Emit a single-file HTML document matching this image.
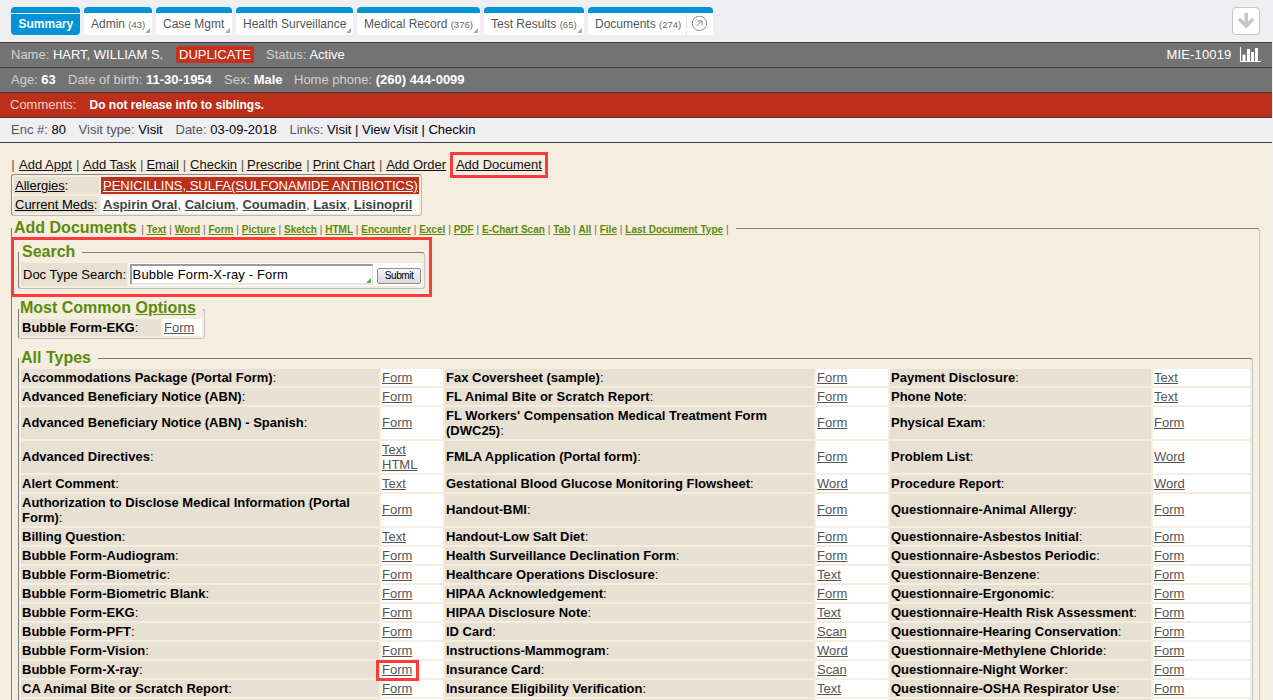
<!DOCTYPE html>
<html><head><meta charset="utf-8">
<style>
*{box-sizing:border-box;margin:0;padding:0}
html,body{width:1273px;height:700px;overflow:hidden}
body{font-family:"Liberation Sans",sans-serif;font-size:13px;background:#efefef;position:relative;color:#000}
#bg{position:absolute;left:0;top:143px;width:1272px;height:600px;background:#f5eddf}
#top{position:absolute;left:0;top:0;width:1273px;height:42px;background:#efeef3}
.tab{position:absolute;top:7px;height:28px;background:#fff;border-radius:4px 4px 2px 2px;border-top:6px solid #0093d6;color:#555;font-size:12px;line-height:16px;padding:3px 0 0 7px;white-space:nowrap}
.tab small{font-size:9.5px;color:#666}
.tab .tri{position:absolute;right:2px;bottom:2px;width:0;height:0;border-left:5px solid transparent;border-bottom:5px solid #aaa}
.row{position:absolute;left:0;width:1272px;height:25px;border-top:1px solid #3e3e3e}
.g{background:#737373;color:#d2d2d2}
.g b{font-weight:normal;color:#fff}
.t{position:absolute;top:4px;white-space:nowrap;line-height:16px}
.lt b{font-weight:normal;color:#000}
.act{position:absolute;left:12px;top:157px;white-space:nowrap;line-height:16px;color:#555}
.act u{color:#111}
.redbox{position:absolute;border:3px solid #fd3b3b}
.fs{position:absolute;border:1px solid;border-color:#7d7d7d #c6c6c6 #bdbdbd #7d7d7d;border-radius:3px}
.fl{border-top-left-radius:0}
.leg{position:absolute;font-size:16px;font-weight:bold;color:#5c8b0a;white-space:nowrap;line-height:19px;background:#f5eddf;padding-right:7px}
.legl{font-size:10px;color:#666;font-weight:normal;word-spacing:.09px}
.legl u{font-weight:bold;color:#5c8b0a}
table{border-collapse:separate;border-spacing:2px;table-layout:fixed}
td{padding:1px;line-height:15px;vertical-align:middle;overflow:hidden}
td.l{background:#e8e1d3;color:#000}
.nw td{white-space:nowrap}
td.l b{font-weight:bold}
td.k{background:#fff;color:#555}
td.k u{color:#555}
td.up{padding-top:0;padding-bottom:2px}
</style></head><body>
<div id="bg"></div>
<div id="top">
  <div class="tab" style="left:11px;width:69px;background:#0093d6;color:#fff;font-weight:bold;padding-left:7.5px;border-radius:4px;box-shadow:inset 0 1px 0 #e6f4fb">Summary</div>
  <div class="tab" style="left:84px;width:68px">Admin <small>(43)</small><span class="tri"></span></div>
  <div class="tab" style="left:156px;width:76px">Case Mgmt<span class="tri"></span></div>
  <div class="tab" style="left:236px;width:117px">Health Surveillance<span class="tri"></span></div>
  <div class="tab" style="left:357px;width:123px">Medical Record <small>(376)</small><span class="tri"></span></div>
  <div class="tab" style="left:484px;width:100px">Test Results <small>(65)</small><span class="tri"></span></div>
  <div class="tab" style="left:588px;width:125px">Documents <small>(274)</small>
    <span style="position:absolute;left:98px;top:0;width:1px;height:22px;background:#e4e4e4"></span>
    <svg style="position:absolute;left:103px;top:3px" width="17" height="16" viewBox="0 0 17 16"><circle cx="8.5" cy="7.3" r="7.2" fill="none" stroke="#8a8a8a" stroke-width="1"/><path d="M5.6 10.2L11 4.8M6.6 4.9h4.5v4.5" fill="none" stroke="#8a8a8a" stroke-width="1"/></svg>
  </div>
  <div style="position:absolute;left:1232px;top:7px;width:28px;height:28px;border:1px solid #c8c8c8;border-radius:4px;background:#fff">
    <svg style="position:absolute;left:4px;top:4px" width="18" height="18" viewBox="0 0 18 18"><path d="M9.2 1v12" fill="none" stroke="#c6c6ca" stroke-width="3.6"/><path d="M3.2 8l6 6 6-6" fill="none" stroke="#c6c6ca" stroke-width="3.6" stroke-linecap="round" stroke-linejoin="miter"/></svg>
  </div>
</div>
<div class="row g" style="top:42px">
  <span class="t" style="left:11px">Name: <b>HART, WILLIAM S.</b></span>
  <span class="t" style="left:176px;top:3px;height:17px;line-height:17px;background:#c4311c;color:#fff;border-radius:3px;padding:0 3px">DUPLICATE</span>
  <span class="t" style="left:266px">Status: <b>Active</b></span>
  <span class="t" style="left:1166.5px;color:#fff;letter-spacing:.15px">MIE-10019</span>
  <svg style="position:absolute;left:1239px;top:4px" width="23" height="17" viewBox="0 0 23 17"><path d="M1.5 0v14.5h20.5" fill="none" stroke="#fff" stroke-width="1.1"/><rect x="3.5" y="7.6" width="3" height="6.4" fill="#fff"/><rect x="8" y="2" width="3" height="12" fill="#fff"/><rect x="12" y="5" width="3" height="9" fill="#fff"/><rect x="16" y="1" width="3" height="13" fill="#fff"/></svg>
</div>
<div class="row g" style="top:67px">
  <span class="t" style="left:11px">Age: <b style="font-weight:bold">63</b></span>
  <span class="t" style="left:68px">Date of birth: <b style="font-weight:bold">11-30-1954</b></span>
  <span class="t" style="left:224px">Sex: <b style="font-weight:bold">Male</b></span>
  <span class="t" style="left:294px">Home phone: <b style="font-weight:bold">(260) 444-0099</b></span>
</div>
<div class="row" style="top:92px;background:#bd2f1b;color:#f3cfc4">
  <span class="t" style="left:10px">Comments:</span>
  <span class="t" style="left:89.5px;color:#fff;font-weight:bold;font-size:12px">Do not release info to siblings.</span>
</div>
<div class="row lt" style="top:117px;background:#efeef3;color:#555;border-bottom:1px solid #3e3e3e;height:26px">
  <span class="t" style="left:11px">Enc #: <b>80</b></span>
  <span class="t" style="left:78.6px">Visit type: <b>Visit</b></span>
  <span class="t" style="left:175.5px">Date: <b>03-09-2018</b></span>
  <span class="t" style="left:289.5px">Links: <b>Visit | View Visit | Checkin</b></span>
</div>

<div class="act" style="left:11.3px">|</div>
<div class="act" style="left:19.0px"><u>Add Appt</u></div>
<div class="act" style="left:75.9px">|</div>
<div class="act" style="left:83.1px"><u>Add Task</u></div>
<div class="act" style="left:140.0px">|</div>
<div class="act" style="left:146.4px"><u>Email</u></div>
<div class="act" style="left:182.8px">|</div>
<div class="act" style="left:190.1px"><u>Checkin</u></div>
<div class="act" style="left:240.7px">|</div>
<div class="act" style="left:247.0px"><u>Prescribe</u></div>
<div class="act" style="left:306.3px">|</div>
<div class="act" style="left:312.7px"><u>Print Chart</u></div>
<div class="act" style="left:378.9px">|</div>
<div class="act" style="left:386.2px"><u>Add Order</u></div>
<div class="act" style="left:455.9px"><u>Add Document</u></div>
<div class="redbox" style="left:450px;top:152px;width:98px;height:26px"></div>

<div class="fs" style="left:11px;top:174px;width:411px;height:42px;border-color:#8a8a8a #c0c0c0 #b8b8b8 #8a8a8a">
  <table class="nw" style="position:absolute;left:0;top:0">
    <tr style="height:17px"><td class="l" style="width:85px;color:#000"><u>Allergies</u>:</td><td style="width:317px;background:#bd2f1b;color:#fff;padding-left:2px"><u>PENICILLINS, SULFA(SULFONAMIDE ANTIBIOTICS)</u></td></tr>
    <tr style="height:17px"><td class="l"><u>Current Meds</u>:</td><td style="background:#fff;color:#444;padding-left:2px"><u><b>Aspirin Oral</b></u>, <u><b>Calcium</b></u>, <u><b>Coumadin</b></u>, <u><b>Lasix</b></u>, <u><b>Lisinopril</b></u></td></tr>
  </table>
</div>

<!-- Add Documents outer fieldset -->
<div class="fs fl" style="left:11px;top:228px;width:1249px;height:500px"></div>
<div class="leg" style="left:12px;top:218px;padding-left:2px">Add Documents <span class="legl">| <u>Text</u> | <u>Word</u> | <u>Form</u> | <u>Picture</u> | <u>Sketch</u> | <u>HTML</u> | <u>Encounter</u> | <u>Excel</u> | <u>PDF</u> | <u>E-Chart Scan</u> | <u>Tab</u> | <u>All</u> | <u>File</u> | <u>Last Document Type</u> |</span></div>

<!-- Search fieldset -->
<div class="fs fl" style="left:18px;top:252px;width:407px;height:37px"></div>
<div class="leg" style="left:19px;top:242px;padding-left:3px">Search</div>
<table class="nw" style="position:absolute;left:19px;top:261px">
  <tr style="height:23px"><td class="l" style="width:106px;padding-left:2px">Doc Type Search:</td><td style="width:293px;background:#fff;padding:0">
    <div style="position:relative;height:23px">
      <div style="position:absolute;left:1px;top:1px;width:243px;height:21px;border:2px solid #9a9a9a;border-right:1px solid #e2e2e2;border-bottom:2px solid #e6e6e6;background:#fff;padding:0 0 0 0.5px;line-height:17px;font-size:13px;letter-spacing:.15px">Bubble Form-X-ray - Form<span style="position:absolute;right:1px;bottom:0px;width:0;height:0;border-left:5px solid transparent;border-bottom:5px solid #5fb040"></span></div>
      <div style="position:absolute;left:248px;top:5px;width:44px;height:16px;border:1px solid #8e8f8f;border-radius:2px;background:linear-gradient(#f6f6f6,#dcdcdc);font-size:10px;line-height:14px;text-align:center;color:#000;letter-spacing:-0.4px">Submit</div>
    </div>
  </td></tr>
</table>
<div class="redbox" style="left:11px;top:237px;width:421px;height:60px"></div>

<!-- Most common fieldset -->
<div class="fs fl" style="left:18px;top:309px;width:187px;height:30px"></div>
<div class="leg" style="left:19px;top:298px;padding-left:1px">Most Common <u>Options</u></div>
<table class="nw" style="position:absolute;left:19px;top:317px">
  <tr style="height:17px"><td class="l" style="width:140px"><b>Bubble Form-EKG</b>:</td><td class="k" style="width:39px"><u>Form</u></td></tr>
</table>

<!-- All types fieldset -->
<div class="fs fl" style="left:18px;top:358px;width:1235px;height:400px"></div>
<div class="leg" style="left:19px;top:348px;padding-left:2px">All Types</div>
<table style="position:absolute;left:19px;top:367px;width:1233px">
<colgroup><col style="width:358px"><col style="width:62px"><col style="width:369px"><col style="width:72px"><col style="width:261px"><col style="width:97px"></colgroup>
<tr style="height:17px"><td class="l"><b>Accommodations Package (Portal Form)</b>:</td><td class="k"><u>Form</u></td><td class="l"><b>Fax Coversheet (sample)</b>:</td><td class="k"><u>Form</u></td><td class="l"><b>Payment Disclosure</b>:</td><td class="k"><u>Text</u></td></tr>
<tr style="height:17px"><td class="l"><b>Advanced Beneficiary Notice (ABN)</b>:</td><td class="k"><u>Form</u></td><td class="l"><b>FL Animal Bite or Scratch Report</b>:</td><td class="k"><u>Form</u></td><td class="l"><b>Phone Note</b>:</td><td class="k"><u>Text</u></td></tr>
<tr style="height:32px"><td class="l up"><b>Advanced Beneficiary Notice (ABN) - Spanish</b>:</td><td class="k up"><u>Form</u></td><td class="l"><b>FL Workers&#39; Compensation Medical Treatment Form (DWC25)</b>:</td><td class="k up"><u>Form</u></td><td class="l up"><b>Physical Exam</b>:</td><td class="k up"><u>Form</u></td></tr>
<tr style="height:32px"><td class="l up"><b>Advanced Directives</b>:</td><td class="k"><u>Text</u><br><u>HTML</u></td><td class="l up"><b>FMLA Application (Portal form)</b>:</td><td class="k up"><u>Form</u></td><td class="l up"><b>Problem List</b>:</td><td class="k up"><u>Word</u></td></tr>
<tr style="height:17px"><td class="l"><b>Alert Comment</b>:</td><td class="k"><u>Text</u></td><td class="l"><b>Gestational Blood Glucose Monitoring Flowsheet</b>:</td><td class="k"><u>Word</u></td><td class="l"><b>Procedure Report</b>:</td><td class="k"><u>Word</u></td></tr>
<tr style="height:32px"><td class="l"><b>Authorization to Disclose Medical Information (Portal Form)</b>:</td><td class="k up"><u>Form</u></td><td class="l up"><b>Handout-BMI</b>:</td><td class="k up"><u>Form</u></td><td class="l up"><b>Questionnaire-Animal Allergy</b>:</td><td class="k up"><u>Form</u></td></tr>
<tr style="height:17px"><td class="l"><b>Billing Question</b>:</td><td class="k"><u>Text</u></td><td class="l"><b>Handout-Low Salt Diet</b>:</td><td class="k"><u>Form</u></td><td class="l"><b>Questionnaire-Asbestos Initial</b>:</td><td class="k"><u>Form</u></td></tr>
<tr style="height:17px"><td class="l"><b>Bubble Form-Audiogram</b>:</td><td class="k"><u>Form</u></td><td class="l"><b>Health Surveillance Declination Form</b>:</td><td class="k"><u>Form</u></td><td class="l"><b>Questionnaire-Asbestos Periodic</b>:</td><td class="k"><u>Form</u></td></tr>
<tr style="height:17px"><td class="l"><b>Bubble Form-Biometric</b>:</td><td class="k"><u>Form</u></td><td class="l"><b>Healthcare Operations Disclosure</b>:</td><td class="k"><u>Text</u></td><td class="l"><b>Questionnaire-Benzene</b>:</td><td class="k"><u>Form</u></td></tr>
<tr style="height:17px"><td class="l"><b>Bubble Form-Biometric Blank</b>:</td><td class="k"><u>Form</u></td><td class="l"><b>HIPAA Acknowledgement</b>:</td><td class="k"><u>Form</u></td><td class="l"><b>Questionnaire-Ergonomic</b>:</td><td class="k"><u>Form</u></td></tr>
<tr style="height:17px"><td class="l"><b>Bubble Form-EKG</b>:</td><td class="k"><u>Form</u></td><td class="l"><b>HIPAA Disclosure Note</b>:</td><td class="k"><u>Text</u></td><td class="l"><b>Questionnaire-Health Risk Assessment</b>:</td><td class="k"><u>Form</u></td></tr>
<tr style="height:17px"><td class="l"><b>Bubble Form-PFT</b>:</td><td class="k"><u>Form</u></td><td class="l"><b>ID Card</b>:</td><td class="k"><u>Scan</u></td><td class="l"><b>Questionnaire-Hearing Conservation</b>:</td><td class="k"><u>Form</u></td></tr>
<tr style="height:17px"><td class="l"><b>Bubble Form-Vision</b>:</td><td class="k"><u>Form</u></td><td class="l"><b>Instructions-Mammogram</b>:</td><td class="k"><u>Word</u></td><td class="l"><b>Questionnaire-Methylene Chloride</b>:</td><td class="k"><u>Form</u></td></tr>
<tr style="height:17px"><td class="l"><b>Bubble Form-X-ray</b>:</td><td class="k"><u>Form</u></td><td class="l"><b>Insurance Card</b>:</td><td class="k"><u>Scan</u></td><td class="l"><b>Questionnaire-Night Worker</b>:</td><td class="k"><u>Form</u></td></tr>
<tr style="height:17px"><td class="l"><b>CA Animal Bite or Scratch Report</b>:</td><td class="k"><u>Form</u></td><td class="l"><b>Insurance Eligibility Verification</b>:</td><td class="k"><u>Text</u></td><td class="l"><b>Questionnaire-OSHA Respirator Use</b>:</td><td class="k"><u>Form</u></td></tr>
<tr style="height:17px"><td class="l"><b>CA Workers&#39; Compensation Report</b>:</td><td class="k"><u>Form</u></td><td class="l"><b>Insurance Card Back</b>:</td><td class="k"><u>Scan</u></td><td class="l"><b>Questionnaire-Respirator</b>:</td><td class="k"><u>Form</u></td></tr>
</table>
<div class="redbox" style="left:376px;top:660px;width:43px;height:21px"></div>
</body></html>
